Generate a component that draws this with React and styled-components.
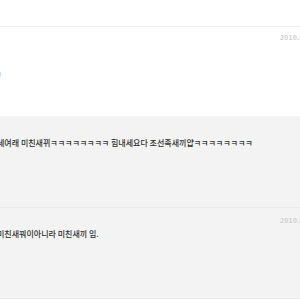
import React from 'react';
import styled, { createGlobalStyle } from 'styled-components';

const GlobalStyle = createGlobalStyle`
  html, body {
    margin: 0;
    padding: 0;
    background: #ffffff;
    overflow: hidden;
  }
  body {
    font-family: "Noto Sans CJK KR", "Noto Sans", sans-serif;
  }
`;

const Page = styled.div`
  width: 300px;
  height: 300px;
  overflow: hidden;
  padding-top: 26px;
  box-sizing: border-box;
`;

const List = styled.div`
  margin-left: -3px;
  width: 360px;
  border-top: 1px solid #f2f2f2;
`;

const Comment = styled.div`
  height: ${(p) => p.h}px;
  box-sizing: border-box;
  background: ${(p) => (p.shaded ? '#f3f3f3' : '#ffffff')};
  border-bottom: 1px solid ${(p) => (p.shaded ? '#ebebeb' : '#f6f6f6')};
  padding-top: ${(p) => p.pad}px;
  display: flex;
  flex-direction: column;
`;

const Meta = styled.div`
  height: 9px;
  padding-left: 283px;
  font-family: "Liberation Sans", Arial, sans-serif;
  font-weight: bold;
  font-size: 7px;
  line-height: 9px;
  letter-spacing: 0.4px;
  color: #cfcfcf;
  white-space: nowrap;
`;

const Body = styled.div`
  margin-top: ${(p) => p.offset}px;
  margin-left: ${(p) => p.indent || 0}px;
  font-size: 8px;
  font-weight: 500;
  line-height: 10px;
  color: #2f2f2f;
  white-space: nowrap;
`;

const comments = [
  { date: '2010.08.21', text: 'ㅋ', offset: 27, indent: -3, shaded: false, h: 90, pad: 6 },
  {
    date: '',
    text: '세여래 미친새뀌ㅋㅋㅋㅋㅋㅋㅋㅋ 힘내세요다 조선족새끼얍ㅋㅋㅋㅋㅋㅋㅋㅋ',
    offset: 6,
    shaded: true,
    h: 91,
    pad: 6,
  },
  { date: '2010.08.21', text: '미친새꿔이아니라 미친새끼 임.', offset: 4, shaded: true, h: 91, pad: 8 },
];

export default function App() {
  return (
    <Page>
      <GlobalStyle />
      <List>
        {comments.map((c, i) => (
          <Comment key={i} shaded={c.shaded} h={c.h} pad={c.pad}>
            <Meta>{c.date}</Meta>
            <Body offset={c.offset} indent={c.indent}>{c.text}</Body>
          </Comment>
        ))}
      </List>
    </Page>
  );
}
